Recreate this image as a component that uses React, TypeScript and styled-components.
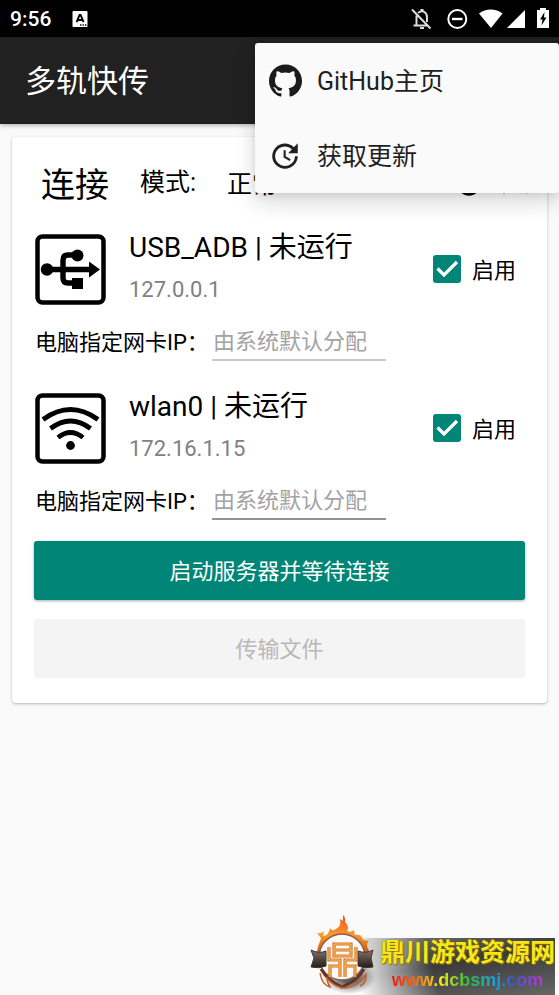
import React from "react";
import styled, { createGlobalStyle } from "styled-components";
import { MdHelp, MdUpdate } from "react-icons/md";

const GlobalStyle = createGlobalStyle`
  * { box-sizing: border-box; }
  body {
    margin: 0;
    background: #fafafa;
    color: #000;
    font-family: Roboto, "Noto Sans CJK SC", sans-serif;
  }
  h1, h2, h3, p { margin: 0; font-weight: 400; }
  button, input, select { font: inherit; }
`;

const Page = styled.div`
  position: relative;
  min-height: 100vh;
  overflow: hidden;
`;

const StatusBar = styled.div`
  display: flex;
  align-items: center;
  justify-content: space-between;
  height: 37px;
  padding: 0 8px 0 10px;
  background: #000;
  color: #fff;
  font-size: 21px;
  font-weight: 500;
`;

const StatusGroup = styled.div`
  display: flex;
  align-items: center;
  gap: 21px;
`;

const AppBar = styled.header`
  display: flex;
  align-items: center;
  height: 87px;
  padding: 2px 25px 0;
  background: #212121;
  color: #fff;
  box-shadow: 0 1px 5px rgba(0, 0, 0, 0.35);
`;

const AppTitle = styled.h1`
  font-size: 31px;
  line-height: 40px;
`;

const Menu = styled.nav`
  position: absolute;
  z-index: 2;
  top: 43px;
  right: 0;
  width: 304px;
  display: flex;
  flex-direction: column;
  border-radius: 3px;
  background: #fafafa;
  box-shadow: 0 10px 22px rgba(0, 0, 0, 0.14), 0 2px 8px rgba(0, 0, 0, 0.1);
`;

const MenuItem = styled.button`
  display: flex;
  align-items: center;
  gap: 15px;
  height: 75px;
  padding: 0 13px;
  border: 0;
  background: none;
  color: #1f1f1f;
  font-size: 25px;
  text-align: left;
`;

const MenuIcon = styled.span`
  display: flex;
  justify-content: center;
  width: 34px;
`;

const MenuText = styled.span`
  padding-bottom: 3px;
`;

const Card = styled.main`
  margin: 13px 12px;
  padding: 0 22px 25px;
  border-radius: 4px;
  background: #fff;
  box-shadow: 0 1px 3px rgba(0, 0, 0, 0.28);
`;

const CardHeader = styled.div`
  display: flex;
  align-items: center;
  height: 96px;
  margin-right: -6px;
  padding: 0 0 5px 7px;
`;

const CardTitle = styled.h2`
  font-size: 34px;
`;

const ModeLabel = styled.label`
  margin-left: 31px;
  font-size: 25px;
  line-height: 40px;
`;

const ModeSelect = styled.select`
  height: 40px;
  margin-left: 31px;
  padding: 4px 0 0;
  border: 0;
  appearance: none;
  background: none;
  color: #000;
  font-size: 25px;
`;

const HelpButton = styled.button`
  display: flex;
  align-items: center;
  gap: 12px;
  margin-left: auto;
  padding: 3px 0 0;
  border: 0;
  background: none;
  color: #888;
  font-size: 18px;
  svg { color: #000; }
`;

const DeviceList = styled.div`
  display: flex;
  flex-direction: column;
  gap: 31px;
`;

const DeviceMain = styled.div`
  display: flex;
  align-items: center;
  height: 72px;
  padding: 0 9px 0 1px;
`;

const DeviceText = styled.div`
  flex: 1;
  margin-left: 23px;
  padding-bottom: 3px;
`;

const DeviceName = styled.h3`
  font-size: 28px;
  line-height: 44px;
`;

const DeviceIp = styled.p`
  color: #808080;
  font-size: 22px;
  line-height: 40px;
`;

const EnableLabel = styled.label`
  display: flex;
  align-items: center;
  gap: 11px;
  font-size: 22px;
`;

const EnableText = styled.span`
  padding-bottom: 3px;
`;

const CheckFrame = styled.span`
  display: grid;
  width: 28px;
  height: 28px;
  & > * { grid-area: 1 / 1; }
  svg { pointer-events: none; }
`;

const CheckInput = styled.input`
  width: 28px;
  height: 28px;
  margin: 0;
  appearance: none;
  border: 2px solid #018577;
  border-radius: 3px;
  &:checked { background: #018577; }
`;

const IpRow = styled.div`
  display: flex;
  align-items: center;
  margin-top: 16px;
  padding-left: 1px;
  font-size: 22px;
`;

const IpLabel = styled.label`
  width: 177px;
  padding-bottom: 3px;
  white-space: nowrap;
`;

const IpInput = styled.input<{ $line: string }>`
  width: 174px;
  height: 40px;
  padding: 3px 1px 0;
  border: 0;
  border-bottom: 2px solid ${(p) => p.$line};
  border-radius: 0;
  background: none;
  outline: none;
  &::placeholder { color: #a3a3a3; opacity: 1; }
`;

const Actions = styled.div`
  display: flex;
  flex-direction: column;
  gap: 19px;
  margin-top: 21px;
`;

const ActionButton = styled.button`
  height: 59px;
  padding: 0 0 3px;
  border: 0;
  border-radius: 3px;
  background: #018577;
  color: #fff;
  font-size: 22px;
  box-shadow: 0 1px 3px rgba(0, 60, 80, 0.4);
  &:disabled {
    background: #f4f4f4;
    color: #b8b8b8;
    box-shadow: none;
  }
`;

const Watermark = styled.aside`
  position: absolute;
  right: 0;
  bottom: 0;
  display: flex;
  align-items: flex-end;
`;

const WatermarkText = styled.div`
  position: relative;
  display: flex;
  flex-direction: column;
  align-items: center;
  height: 59px;
  padding: 0 4px 0 3px;
  &::before {
    content: "";
    position: absolute;
    z-index: -1;
    inset: 2px 4px 0 -24px;
    background: linear-gradient(170deg, #777, #3a3a3a 45%, #666 100%);
    mask-image: linear-gradient(75deg, transparent 4%, #000 40%);
  }
`;

const SiteName = styled.strong`
  color: #f8e61c;
  font-size: 25px;
  font-weight: 700;
  line-height: 34px;
  white-space: nowrap;
  text-shadow: 0 0 1px #7b6400, 1px 1px 1px #8a7000;
`;

const SiteUrl = styled.a`
  background: linear-gradient(90deg, #e81c12, #f57a10 18%, #f6ea1a 32%, #35bd3a 50%, #18a2d8 68%, #4054d0 80%, #b83cc8);
  background-clip: text;
  color: transparent;
  font-family: "Liberation Sans", sans-serif;
  font-size: 18px;
  font-weight: 700;
  line-height: 20px;
  text-decoration: none;
`;

const KeyboardIcon = () => (
  <svg width="16" height="18" viewBox="0 0 16 18" aria-hidden="true">
    <rect x="0.5" y="1" width="15" height="16" rx="1" fill="#fff" />
    <path d="M4.6 12.2 7.6 5h1L11.6 12.2M6 10h4.3" fill="none" stroke="#000" strokeWidth="1.9" />
    <path d="M8 15h1.4M10.5 15h1.4M13 15h1.4" stroke="#000" strokeWidth="1.3" />
  </svg>
);

const StatusIcons = () => (
  <svg width="142" height="24" viewBox="409 7 142 24" aria-hidden="true">
    <g fill="none" stroke="#ddd" strokeWidth="2">
      <path d="M412 9.5 430.500 28.500M416.500 15.500V25.500H426M413.500 25.500H428M418 13c5-4 9 0 9 4v5" />
      <circle cx="457.300" cy="19" r="9" stroke="#fff" />
      <path d="M452 19h10.500" stroke="#fff" strokeWidth="2.400" />
    </g>
    <path d="M420.500 11V9h3v2zM420 27h4v2h-4z" fill="#ddd" />
    <path d="M479 13.500C485.500 8 496 8 502.500 13.500L491 28z" fill="#fff" />
    <path d="M507 28 525 10V28z" fill="#fff" />
    <path d="M540 8h6v2h3v18h-12V10h3z" fill="#fff" />
    <path d="m544.500 12-4.500 7.500h2.500l-1 6 5-8H544z" fill="#000" />
  </svg>
);

const GithubMark = () => (
  <svg width="33" height="33" viewBox="0 0 24 24" fill="#1b1b1b" aria-hidden="true">
    <path d="M12 .297c-6.63 0-12 5.373-12 12 0 5.303 3.438 9.8 8.205 11.385.6.113.82-.258.82-.577 0-.285-.01-1.04-.015-2.04-3.338.724-4.042-1.61-4.042-1.61C4.422 18.07 3.633 17.7 3.633 17.7c-1.087-.744.084-.729.084-.729 1.205.084 1.838 1.236 1.838 1.236 1.07 1.835 2.809 1.305 3.495.998.108-.776.417-1.305.76-1.605-2.665-.3-5.466-1.332-5.466-5.93 0-1.31.465-2.38 1.235-3.22-.135-.303-.54-1.523.105-3.176 0 0 1.005-.322 3.3 1.23.96-.267 1.98-.399 3-.405 1.02.006 2.04.138 3 .405 2.28-1.552 3.285-1.23 3.285-1.23.645 1.653.24 2.873.12 3.176.765.84 1.23 1.91 1.23 3.22 0 4.61-2.805 5.625-5.475 5.92.42.36.81 1.096.81 2.22 0 1.606-.015 2.896-.015 3.286 0 .315.21.69.825.57C20.565 22.092 24 17.592 24 12.297c0-6.627-5.373-12-12-12" />
  </svg>
);

const CheckMark = () => (
  <svg width="28" height="28" viewBox="0 0 28 28" aria-hidden="true">
    <path d="M4.500 13.500 11 20 24 7" fill="none" stroke="#fff" strokeWidth="3.200" />
  </svg>
);

const UsbIcon = () => (
  <svg width="71" height="71" viewBox="0 0 71 71" aria-hidden="true">
    <rect x="2.500" y="2.500" width="66" height="66" rx="5" fill="none" stroke="#000" strokeWidth="4.500" />
    <path d="M12 35.500H56M42 21H33q-5 0-5 5V44q0 5 5 5h9" fill="none" stroke="#000" strokeWidth="5.400" />
    <circle cx="12" cy="35.500" r="6.200" />
    <circle cx="42.500" cy="21.500" r="6" />
    <path d="M54 27.500 65 35.500 54 43.500zM37 44h11v11H37z" />
  </svg>
);

const WifiIcon = () => (
  <svg width="71" height="71" viewBox="0 0 71 71" aria-hidden="true">
    <rect x="2.500" y="2.500" width="66" height="66" rx="5" fill="none" stroke="#000" strokeWidth="4.500" />
    <path d="M8 26.500Q35.500 6.500 63 26.500M15.500 35.500Q35.500 20.500 55.500 35.500M23 44.500Q35.500 34.500 48 44.500" fill="none" stroke="#000" strokeWidth="4.800" />
    <circle cx="35.500" cy="52.500" r="4.400" />
  </svg>
);

const FlameCrest = () => (
  <svg width="68" height="82" viewBox="0 0 68 82" aria-hidden="true">
    <defs>
      <linearGradient id="flame" x1="0" y1="0" x2="0" y2="1">
        <stop offset="0" stopColor="#ee4a18" />
        <stop offset="0.45" stopColor="#fb9a2a" />
        <stop offset="1" stopColor="#b94312" />
      </linearGradient>
      <linearGradient id="band" x1="0" y1="0" x2="0" y2="1">
        <stop offset="0" stopColor="#80736a" />
        <stop offset="1" stopColor="#241b18" />
      </linearGradient>
      <radialGradient id="smoke">
        <stop offset="0.3" stopColor="#333" stopOpacity="0.8" />
        <stop offset="1" stopColor="#555" stopOpacity="0" />
      </radialGradient>
    </defs>
    <ellipse cx="40" cy="64" rx="27" ry="17" fill="url(#smoke)" />
    <path d="M8 46C7 34 11 30 12 25L8 20q5 1 7-2l-1 5q6-1 7-8 2 4 6 1 6-3 4-10l3 2V2q3 3 2 7 5 5 2 9 4 2 7-1l1 5q7-1 8 5l6 1q-4 4 0 9l-3 9z" fill="url(#flame)" />
    <circle cx="33" cy="44" r="23" fill="#fafafa" stroke="#8d6148" strokeWidth="1.500" />
    <path d="M12 56Q19 68 33 74 48 68 55 56" fill="none" stroke="#5b382b" strokeWidth="3" />
    <path d="M11 60q2 12 10 14-3-5-3-9 8 10 19 10 12-2 20-13 0 9-6 11" fill="none" stroke="#c65b25" strokeWidth="1.500" />
    <path d="M2 37q8 4 15 1v15q-7 3-15 1l3-9zM49 38q8 3 15-1l-2 8 2 9q-8 2-15-1z" fill="url(#band)" stroke="#40342e" />
    <g fill="none" stroke="#d9701c" strokeWidth="3.200">
      <path d="M25 31H42V43H25zM25 37H42M20 34V47H31V64M47 34V47H36V64M21 64V53H31M46 64V53H36" />
    </g>
    <g fill="none" stroke="#ffd47b" strokeWidth="0.900">
      <path d="M25 31H42V43H25zM25 37H42M20 34V47H31V64M47 34V47H36V64M21 64V53H31M46 64V53H36" />
    </g>
  </svg>
);

type DeviceProps = { id: string; name: string; ip: string; icon: React.ReactNode; line: string };

const Device = ({ id, name, ip, icon, line }: DeviceProps) => (
  <section>
    <DeviceMain>
      {icon}
      <DeviceText>
        <DeviceName>{name} | 未运行</DeviceName>
        <DeviceIp>{ip}</DeviceIp>
      </DeviceText>
      <EnableLabel>
        <CheckFrame>
          <CheckInput type="checkbox" defaultChecked />
          <CheckMark />
        </CheckFrame>
        <EnableText>启用</EnableText>
      </EnableLabel>
    </DeviceMain>
    <IpRow>
      <IpLabel htmlFor={id}>电脑指定网卡IP：</IpLabel>
      <IpInput id={id} placeholder="由系统默认分配" $line={line} />
    </IpRow>
  </section>
);

export default function App() {
  return (
    <Page>
      <GlobalStyle />
      <StatusBar>
        <StatusGroup>
          <span>9:56</span>
          <KeyboardIcon />
        </StatusGroup>
        <StatusIcons />
      </StatusBar>
      <AppBar>
        <AppTitle>多轨快传</AppTitle>
      </AppBar>
      <Menu aria-label="菜单">
        <MenuItem type="button">
          <MenuIcon><GithubMark /></MenuIcon>
          <MenuText>GitHub主页</MenuText>
        </MenuItem>
        <MenuItem type="button">
          <MenuIcon><MdUpdate size={36} /></MenuIcon>
          <MenuText>获取更新</MenuText>
        </MenuItem>
      </Menu>
      <Card>
        <CardHeader>
          <CardTitle>连接</CardTitle>
          <ModeLabel htmlFor="mode">模式:</ModeLabel>
          <ModeSelect id="mode">
            <option>正常</option>
          </ModeSelect>
          <HelpButton type="button">
            <MdHelp size={28} />
            帮助
          </HelpButton>
        </CardHeader>
        <DeviceList>
          <Device id="ip-usb" name="USB_ADB" ip="127.0.0.1" icon={<UsbIcon />} line="#c9c9c9" />
          <Device id="ip-wlan" name="wlan0" ip="172.16.1.15" icon={<WifiIcon />} line="#949494" />
        </DeviceList>
        <Actions>
          <ActionButton type="button">启动服务器并等待连接</ActionButton>
          <ActionButton type="button" disabled>传输文件</ActionButton>
        </Actions>
      </Card>
      <Watermark>
        <FlameCrest />
        <WatermarkText>
          <SiteName>鼎川游戏资源网</SiteName>
          <SiteUrl href="#">www.dcbsmj.com</SiteUrl>
        </WatermarkText>
      </Watermark>
    </Page>
  );
}
